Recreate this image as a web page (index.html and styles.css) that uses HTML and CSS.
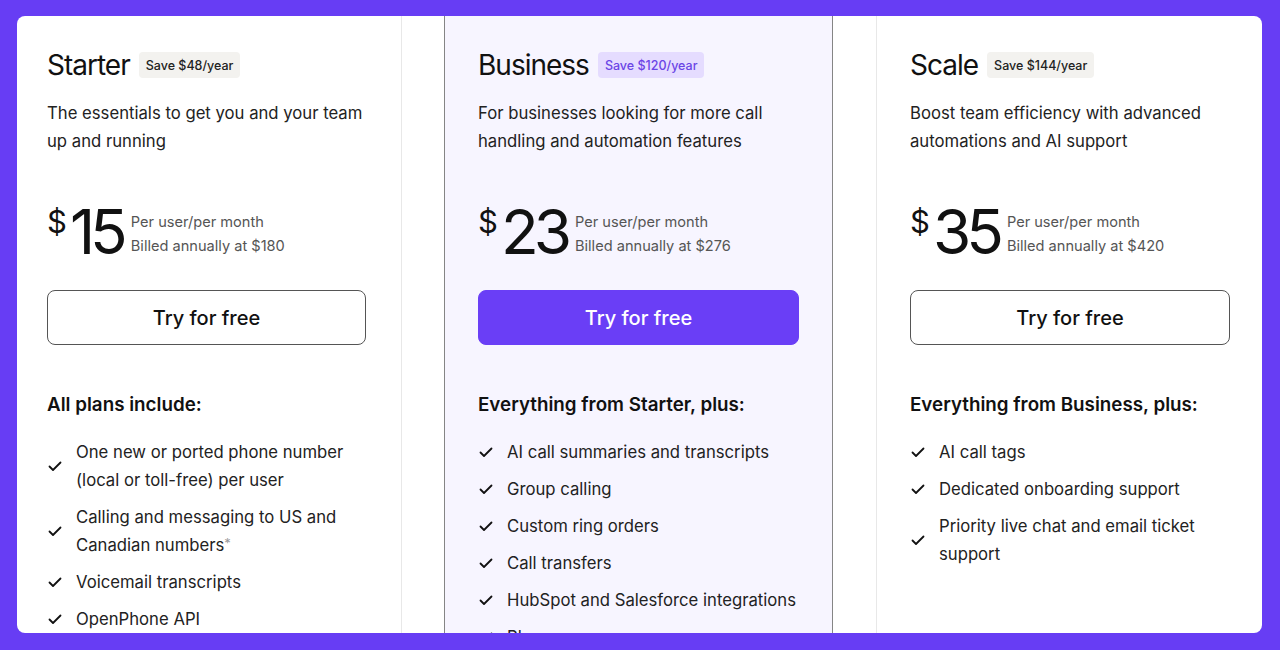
FILE: index.html
```html
<!DOCTYPE html>
<html lang="en">
<head>
<meta charset="utf-8">
<title>Pricing</title>
<link rel="stylesheet" href="styles.css">
</head>
<body>
<div class="panel">
  <div class="plan plan-first">
    <div class="head">
      <h2 class="name">Starter</h2>
      <span class="badge">Save $48/year</span>
    </div>
    <p class="desc">The essentials to get you and your team up and running</p>
    <div class="price">
      <span class="cur">$</span>
      <span class="num">15</span>
      <div class="terms">
        <div>Per user/per month</div>
        <div>Billed annually at $180</div>
      </div>
    </div>
    <a class="btn">Try for free</a>
    <h3 class="inc">All plans include:</h3>
    <ul class="feats">
      <li><svg class="chk" viewBox="0 0 16 16"><polyline points="2.5,8.5 6,12 13.5,4.5"/></svg><span>One new or ported phone number (local or toll-free) per user</span></li>
      <li><svg class="chk" viewBox="0 0 16 16"><polyline points="2.5,8.5 6,12 13.5,4.5"/></svg><span>Calling and messaging to US and Canadian numbers<span class="ast">*</span></span></li>
      <li><svg class="chk" viewBox="0 0 16 16"><polyline points="2.5,8.5 6,12 13.5,4.5"/></svg><span>Voicemail transcripts</span></li>
      <li><svg class="chk" viewBox="0 0 16 16"><polyline points="2.5,8.5 6,12 13.5,4.5"/></svg><span>OpenPhone API</span></li>
    </ul>
  </div>

  <div class="plan plan-featured">
    <div class="head">
      <h2 class="name">Business</h2>
      <span class="badge badge-purple">Save $120/year</span>
    </div>
    <p class="desc">For businesses looking for more call handling and automation features</p>
    <div class="price">
      <span class="cur">$</span>
      <span class="num">23</span>
      <div class="terms">
        <div>Per user/per month</div>
        <div>Billed annually at $276</div>
      </div>
    </div>
    <a class="btn btn-primary">Try for free</a>
    <h3 class="inc">Everything from Starter, plus:</h3>
    <ul class="feats">
      <li><svg class="chk" viewBox="0 0 16 16"><polyline points="2.5,8.5 6,12 13.5,4.5"/></svg><span>AI call summaries and transcripts</span></li>
      <li><svg class="chk" viewBox="0 0 16 16"><polyline points="2.5,8.5 6,12 13.5,4.5"/></svg><span>Group calling</span></li>
      <li><svg class="chk" viewBox="0 0 16 16"><polyline points="2.5,8.5 6,12 13.5,4.5"/></svg><span>Custom ring orders</span></li>
      <li><svg class="chk" viewBox="0 0 16 16"><polyline points="2.5,8.5 6,12 13.5,4.5"/></svg><span>Call transfers</span></li>
      <li><svg class="chk" viewBox="0 0 16 16"><polyline points="2.5,8.5 6,12 13.5,4.5"/></svg><span>HubSpot and Salesforce integrations</span></li>
      <li><svg class="chk" viewBox="0 0 16 16"><polyline points="2.5,8.5 6,12 13.5,4.5"/></svg><span>Phone menus</span></li>
    </ul>
  </div>

  <div class="plan plan-last">
    <div class="head">
      <h2 class="name">Scale</h2>
      <span class="badge">Save $144/year</span>
    </div>
    <p class="desc">Boost team efficiency with advanced automations and AI support</p>
    <div class="price">
      <span class="cur">$</span>
      <span class="num">35</span>
      <div class="terms">
        <div>Per user/per month</div>
        <div>Billed annually at $420</div>
      </div>
    </div>
    <a class="btn">Try for free</a>
    <h3 class="inc">Everything from Business, plus:</h3>
    <ul class="feats">
      <li><svg class="chk" viewBox="0 0 16 16"><polyline points="2.5,8.5 6,12 13.5,4.5"/></svg><span>AI call tags</span></li>
      <li><svg class="chk" viewBox="0 0 16 16"><polyline points="2.5,8.5 6,12 13.5,4.5"/></svg><span>Dedicated onboarding support</span></li>
      <li><svg class="chk" viewBox="0 0 16 16"><polyline points="2.5,8.5 6,12 13.5,4.5"/></svg><span>Priority live chat and email ticket support</span></li>
    </ul>
  </div>
</div>
</body>
</html>
```

FILE: styles.css
```css
* { box-sizing: border-box; }

html, body {
  margin: 0;
  height: 650px;
  overflow: hidden;
}

body {
  background: #673df4;
  padding: 16px 18px 17px 17px;
  font-family: Inter, "Noto Sans", "Liberation Sans", sans-serif;
  color: #1a1a1a;
}

.panel {
  height: 617px;
  background: #ffffff;
  border-radius: 8px;
  overflow: hidden;
  display: flex;
  align-items: stretch;
}

.plan {
  display: flex;
  flex-direction: column;
  padding-top: 32px;
  flex: none;
}

.plan > * {
  flex-shrink: 0;
}

.plan-first {
  width: 385px;
  padding-left: 30px;
  padding-right: 35px;
  border-right: 1px solid #e8e8e8;
}

.plan-featured {
  width: 389px;
  margin-left: 42px;
  padding-left: 33px;
  padding-right: 33px;
  background: #f7f5ff;
  border-left: 1px solid #858585;
  border-right: 1px solid #858585;
}

.plan-last {
  width: 386px;
  margin-left: 43px;
  padding-left: 33px;
  padding-right: 32px;
  border-left: 1px solid #e8e8e8;
}

.head {
  display: flex;
  align-items: center;
  gap: 9px;
  height: 34px;
}

.name {
  margin: 0;
  font-size: 28px;
  line-height: 34px;
  font-weight: 400;
  letter-spacing: -1px;
  color: #111;
}

.badge {
  display: inline-flex;
  align-items: center;
  height: 26px;
  padding: 0 7px;
  border-radius: 4px;
  background: #f3f2ef;
  color: #222;
  font-size: 12.5px;
  font-weight: 500;
}

.badge-purple {
  background: #e5dcff;
  color: #6b45e6;
}

.desc {
  margin: 17px 0 0;
  font-size: 16.7px;
  line-height: 28px;
  color: #222;
  min-height: 56px;
}

.price {
  display: flex;
  align-items: flex-start;
  margin-top: 46px;
  height: 64px;
}

.cur {
  font-size: 31px;
  line-height: 31px;
  margin-top: 5px;
  color: #111;
}

.num {
  font-size: 62px;
  line-height: 62px;
  letter-spacing: -5px;
  margin-left: 3px;
  color: #111;
}

.terms {
  margin-left: 8px;
  margin-top: 9px;
  font-size: 14.6px;
  line-height: 24px;
  color: #555;
}

.btn {
  display: flex;
  align-items: center;
  justify-content: center;
  margin-top: 25px;
  height: 55px;
  border: 1px solid #555;
  border-radius: 8px;
  font-size: 20px;
  font-weight: 500;
  color: #111;
  background: #fff;
}

.btn-primary {
  background: #6a3ef6;
  border-color: #6a3ef6;
  color: #fff;
}

.inc {
  margin: 46px 0 0;
  font-size: 18.8px;
  line-height: 28px;
  font-weight: 600;
  color: #111;
}

.feats {
  list-style: none;
  margin: 19px 0 0;
  padding: 0;
  display: flex;
  flex-direction: column;
  gap: 9px;
}

.feats li {
  display: flex;
  align-items: center;
  gap: 13px;
  font-size: 16.7px;
  line-height: 28px;
  color: #222;
}

.chk {
  width: 16px;
  height: 16px;
  flex: none;
  fill: none;
  stroke: #111;
  stroke-width: 1.8;
  stroke-linecap: round;
  stroke-linejoin: round;
}

.ast {
  color: #999;
  font-size: 13px;
  line-height: 0;
  vertical-align: 3px;
}
```
